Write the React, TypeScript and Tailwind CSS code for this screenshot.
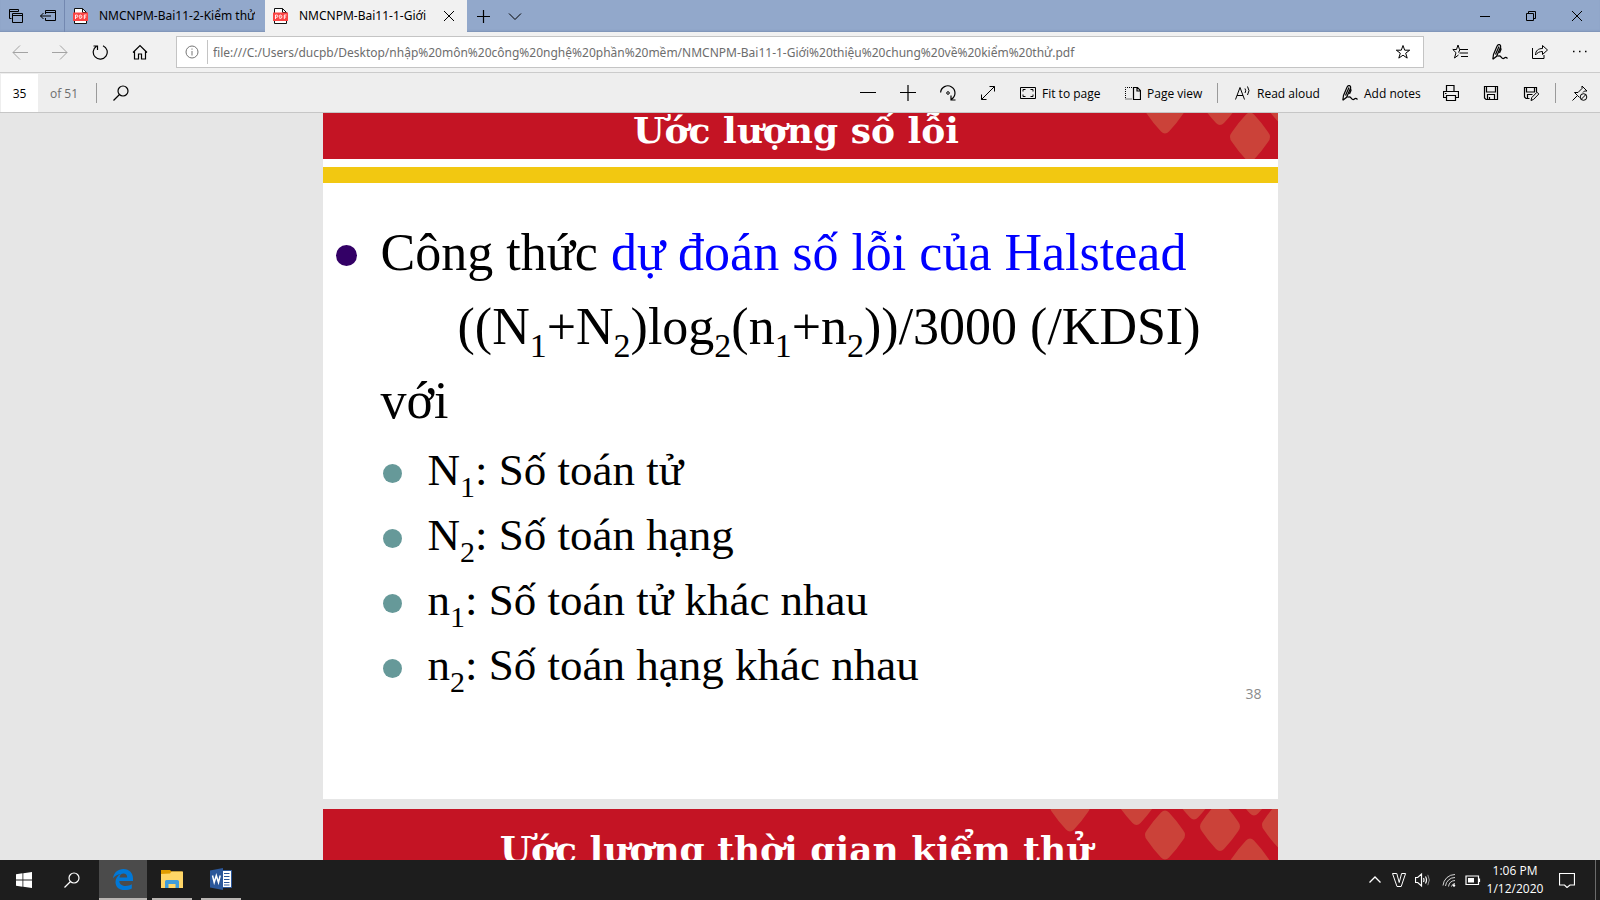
import React from "react";

type SvgProps = { children: React.ReactNode; size?: string; box?: string; className?: string };

function Icon({ children, size = "size-4", box = "0 0 16 16", className = "" }: SvgProps) {
  return (
    <svg
      viewBox={box}
      className={`${size} shrink-0 ${className}`}
      fill="none"
      stroke="currentColor"
      strokeWidth="1"
      aria-hidden="true"
    >
      {children}
    </svg>
  );
}

const PdfIcon = () => (
  <svg viewBox="0 0 16 16" className="size-4 shrink-0" aria-hidden="true">
    <path d="M1.5 .5h8l4 4v11h-12z" fill="#fff" stroke="#111" />
    <path d="M9.5 .5v4h4" fill="none" stroke="#111" />
    <rect x="0" y="4.500" width="15" height="8.500" fill="#fb4444" />
    <path
      d="M2.500 11V7h1.300a1 1 0 0 1 0 2.300H2.500M6.800 7v3.500h.7c1.900 0 1.900-3.500 0-3.500zM11.300 11V7h2.200M11.300 9h1.800"
      fill="none"
      stroke="#fff"
      strokeWidth=".9"
    />
  </svg>
);

const PenIcon = () => (
  <Icon>
    <path
      d="M.8 15.300L1.500 10.500 5 2.200C6.200-.4 9.300.4 8.500 3.200L4.600 12.300.8 15.300M3.500 10.500L7 2.500M8.500 3.200L9 5.500 7.500 9M5.500 12.300c1.600-.8 2.700-.6 3.700.8s2 2 3.200.9 2-.6 3.100.5"
      strokeWidth="1.200"
    />
  </Icon>
);

const SearchIcon = ({ size = "size-4" }: { size?: string }) => (
  <Icon size={size}>
    <circle cx="10" cy="6" r="5" strokeWidth="1.200" />
    <path d="M6.500 9.500L.5 15.500" strokeWidth="1.200" />
  </Icon>
);

function IconButton({ label, children, className = "w-10" }: { label: string; children: React.ReactNode; className?: string }) {
  return (
    <button type="button" aria-label={label} className={`flex h-full shrink-0 items-center justify-center ${className}`}>
      {children}
    </button>
  );
}

function TextButton({ label, children, className }: { label: string; children: React.ReactNode; className: string }) {
  return (
    <button type="button" className={`flex h-full shrink-0 items-center gap-1.5 whitespace-nowrap pl-3 ${className}`}>
      {children}
      <span className="pt-0.5">{label}</span>
    </button>
  );
}

function TabBar() {
  return (
    <header className="flex h-8 shrink-0 items-stretch bg-[#92a8cb] shadow-[inset_0_-2px_2px_-1px_#7d92b5]">
      <IconButton label="Tabs you've set aside" className="w-8">
        <Icon>
          <path d="M3.500 10.500h-2v-9h9v2M1.500 3.500h9M4.500 5.500h10v9h-10zM4.500 7.500h10" />
        </Icon>
      </IconButton>
      <IconButton label="Set these tabs aside" className="w-8">
        <Icon>
          <path d="M5.500 6V2.500h10v10h-10V10M5.500 4.500h10M.5 8H11M3.500 5L.5 8l3 3" />
        </Icon>
      </IconButton>
      <div role="tablist" className="flex font-['Noto_Sans',sans-serif]">
        <button type="button" role="tab" aria-selected="false" className="flex w-[201px] items-center gap-2.5 border-l border-[#7388b0] px-2">
          <PdfIcon />
          <span className="overflow-hidden whitespace-nowrap">NMCNPM-Bai11-2-Kiểm thử</span>
        </button>
        <div className="flex w-[202px] items-center bg-[#f1f1f1] pl-2">
          <button type="button" role="tab" aria-selected="true" className="flex w-[168px] items-center gap-2.5">
            <PdfIcon />
            <span className="overflow-hidden whitespace-nowrap">NMCNPM-Bai11-1-Giới</span>
          </button>
          <button type="button" aria-label="Close tab" className="p-0.5">
            <Icon size="size-3" box="0 0 12 12">
              <path d="M1 1l10 10M11 1L1 11" />
            </Icon>
          </button>
        </div>
      </div>
      <IconButton label="New tab" className="w-8">
        <Icon>
          <path d="M8.500 2v13M2 8.500h13" strokeWidth="1.200" />
        </Icon>
      </IconButton>
      <IconButton label="Show tab previews" className="w-8">
        <Icon>
          <path d="M2 5.500l6 6 6-6" />
        </Icon>
      </IconButton>
      <div className="ml-auto flex">
        <IconButton label="Minimize" className="w-[46px]">
          <Icon size="size-2.5" box="0 0 10 10">
            <path d="M0 5.500h10" />
          </Icon>
        </IconButton>
        <IconButton label="Restore" className="w-[46px]">
          <Icon size="size-2.5" box="0 0 10 10">
            <path d="M.5 2.500h7v7h-7zM2.500 2.500v-2h7v7h-2" />
          </Icon>
        </IconButton>
        <IconButton label="Close" className="w-[46px]">
          <Icon size="size-2.5" box="0 0 10 10">
            <path d="M0 0l10 10M10 0L0 10" />
          </Icon>
        </IconButton>
      </div>
    </header>
  );
}

function NavBar() {
  return (
    <nav className="flex h-[41px] shrink-0 items-center border-b border-[#cbcbcb] bg-[#f1f1f1]">
      <div className="flex h-full text-[#a3a3a3]">
        <IconButton label="Back">
          <Icon>
            <path d="M1 8.500h15M8 1.500l-7 7 7 7" />
          </Icon>
        </IconButton>
        <IconButton label="Forward">
          <Icon>
            <path d="M0 8.500h15M8 1.500l7 7-7 7" />
          </Icon>
        </IconButton>
      </div>
      <IconButton label="Refresh">
        <Icon>
          <path d="M11 1.700A7 7 0 1 1 4.500 2.200M1.500 2h4v4" strokeWidth="1.200" />
        </Icon>
      </IconButton>
      <IconButton label="Home">
        <Icon>
          <path d="M1 8.500l7-7 7 7M2.500 7.500v7.500h4v-5h3v5h4V7.500" strokeWidth="1.200" />
        </Icon>
      </IconButton>
      <div className="ml-4 flex h-8 min-w-0 flex-1 items-center border border-[#c4c4c4] bg-white">
        <span className="flex w-[30px] shrink-0 justify-center text-[#767676]">
          <Icon size="size-3.5" box="0 0 14 14">
            <circle cx="7" cy="7" r="6" />
            <path d="M7 6v4.500M7 3.500v1.200" />
          </Icon>
        </span>
        <span className="h-6 w-px shrink-0 bg-[#c4c4c4]" />
        <input
          aria-label="Address"
          className="min-w-0 flex-1 bg-transparent pl-[5px] pt-0.5 font-['Noto_Sans',sans-serif] text-[#6d6d6d] outline-none"
          defaultValue="file:///C:/Users/ducpb/Desktop/nhập%20môn%20công%20nghệ%20phần%20mềm/NMCNPM-Bai11-1-Giới%20thiệu%20chung%20về%20kiểm%20thử.pdf"
        />
        <IconButton label="Add to favorites">
          <Icon>
            <path d="M8 1.500l1.700 4.700h5L10.700 9.200l1.500 4.900L8 11.200l-4.200 2.900L5.300 9.200 1.300 6.200h5z" />
          </Icon>
        </IconButton>
      </div>
      <div className="ml-4 flex h-full">
        <IconButton label="Favorites and history">
          <Icon>
            <path d="M11 5.500H7.500L6 1 4.500 5.500H.8l3.200 3.200L2.500 14 6.500 11M6.500 8.500L8 5.500M8 5.500h8M7.500 9h8.500M9 12.500h7" />
          </Icon>
        </IconButton>
        <IconButton label="Add notes to page">
          <PenIcon />
        </IconButton>
        <IconButton label="Share">
          <Icon>
            <path d="M.5 4v10.500h11.500V11M3.500 11c0-4.500 3-6.500 7-6.500V1.500l5 4.500-5 4.500v-3c-3 0-5 1-7 3.500z" />
          </Icon>
        </IconButton>
        <IconButton label="Settings and more">
          <Icon>
            <path d="M1 7.500h1.500M7 7.500h1.500M13 7.500h1.500" strokeWidth="1.500" />
          </Icon>
        </IconButton>
      </div>
    </nav>
  );
}

function PdfToolbar() {
  return (
    <div role="toolbar" aria-label="PDF" className="flex h-10 shrink-0 items-center border-b border-[#c6c6c6] bg-[#eeeeee]">
      <input aria-label="Page number" defaultValue="35" className="ml-px h-[38px] w-[37px] bg-white pt-0.5 text-center outline-none" />
      <span className="ml-3 w-[45px] pt-0.5 text-[#6d6d6d]">of 51</span>
      <span className="ml-px h-5 w-px bg-[#9a9a9a]" />
      <IconButton label="Find" className="w-12">
        <SearchIcon />
      </IconButton>
      <div className="ml-auto flex h-full items-center">
        <IconButton label="Zoom out">
          <Icon>
            <path d="M0 7.500h16" />
          </Icon>
        </IconButton>
        <IconButton label="Zoom in">
          <Icon>
            <path d="M0 7.500h16M8 0v16" strokeWidth="1.200" />
          </Icon>
        </IconButton>
        <IconButton label="Rotate">
          <Icon>
            <path d="M.6 7.500A7.200 7.200 0 1 1 11.500 14.200M11 10.500v4.500h4.500" strokeWidth="1.200" />
            <circle cx="8" cy="8" r="1.300" />
          </Icon>
        </IconButton>
        <IconButton label="Full screen">
          <Icon>
            <path d="M1.500 14.500l13-13M9.500 1.500h5v5M1.500 9.500v5h5" />
          </Icon>
        </IconButton>
        <TextButton label="Fit to page" className="w-[105px]">
          <Icon>
            <path d="M.5 2.500h15v11H.5zM3 6.500v-2h2.500M10.500 4.500H13v2M3 9.500v2h2.500M10.500 11.500H13v-2" />
          </Icon>
        </TextButton>
        <TextButton label="Page view" className="w-[104px]">
          <Icon>
            <path d="M8.500 2.500h4l3 3v9h-7zM12 2.500v3.500h3.500" strokeWidth="1.200" />
            <path d="M7 2.500H.5v11.500H7" strokeDasharray="1 1" />
          </Icon>
        </TextButton>
        <span className="mr-[5px] h-5 w-px bg-[#9a9a9a]" />
        <TextButton label="Read aloud" className="w-[107px]">
          <Icon>
            <path d="M.5 14.500L5 2.500l4.500 12M2 10.500h6M10 3.500q1.500 2.200 0 4.500M12.500 1.500q3 4 0 8.500" />
          </Icon>
        </TextButton>
        <TextButton label="Add notes" className="w-[101px]">
          <PenIcon />
        </TextButton>
        <IconButton label="Print">
          <Icon>
            <path d="M3.500 6V.5h7.500V6M3.500 12.500h-3v-6h15v6h-3M3.500 10.500h9v5h-9zM2 8.500h1.500" strokeWidth="1.200" />
          </Icon>
        </IconButton>
        <IconButton label="Save">
          <Icon>
            <path d="M1.500 1.500h13v13H3l-1.500-1.500zM3.500 1.500v5.500h9V1.500M4.500 14.500v-5h7v5M6.500 14.500v-2.500" strokeWidth="1.200" />
          </Icon>
        </IconButton>
        <IconButton label="Save as">
          <Icon>
            <path d="M6.500 13.500H3L1.500 12V2.500h12V7M3.500 2.500v4.500h8V2.500M4.500 13.500v-4h5" strokeWidth="1.200" />
            <path d="M8 15.500l.8-3L14 7.200l1.800 1.800-5.200 5.400z" />
          </Icon>
        </IconButton>
        <span className="mx-1 h-5 w-px bg-[#9a9a9a]" />
        <IconButton label="Unpin toolbar">
          <Icon>
            <path d="M.5 15.500l5-5M2.500 7.500l3 3 2 2M2.500 7.500h3.500L10 3.500V1l5 5h-2.500l-1.500 1.500" />
            <circle cx="11.500" cy="12" r="3.300" />
            <path d="M9.200 14.300l4.600-4.600" />
          </Icon>
        </IconButton>
      </div>
    </div>
  );
}

const diamonds = [
  [-58, -2],
  [8.5, -8.5],
  [37, 26],
  [66, -14],
  [92, 17.5],
  [126, -18],
  [154, 16],
  [122, 54],
];

function SlideHeader({ title, className }: { title: string; className: string }) {
  return (
    <div className={`relative h-[76px] overflow-hidden bg-[#c41424] pr-2 text-center ${className}`}>
      <svg viewBox="-90 0 240 76" className="absolute right-0 top-0 h-[76px] w-[240px]" fill="#cb4239" aria-hidden="true">
        {diamonds.map(([x, y]) => (
          <path
            key={`${x}-${y}`}
            transform={`translate(${x} ${y})`}
            d="M-4-22.500Q0-26.500 4-22.500Q12-14 18-5Q22 0 18 5Q12 14 4 22.500Q0 26.500-4 22.500Q-12 14-18 5Q-22 0-18-5Q-12-14-4-22.500Z"
          />
        ))}
      </svg>
      <h2 className="relative whitespace-nowrap font-['DejaVu_Serif',serif] text-[36px] font-bold leading-[44px] text-white">
        {title}
      </h2>
    </div>
  );
}

const Sub = ({ children }: { children: string }) => <sub className="static align-[-13px] text-[34px] leading-none">{children}</sub>;
const SmallSub = ({ children }: { children: string }) => <sub className="static align-[-12px] text-[30px] leading-none">{children}</sub>;

const terms = [
  { name: "N", index: "1", text: "Số toán tử" },
  { name: "N", index: "2", text: "Số toán hạng" },
  { name: "n", index: "1", text: "Số toán tử khác nhau" },
  { name: "n", index: "2", text: "Số toán hạng khác nhau" },
];

function Document() {
  return (
    <main className="min-h-0 flex-1 overflow-hidden bg-[#e6e6e6]">
      <div className="mx-auto -mt-[30px] flex w-[955px] flex-col gap-2.5">
        <section className="flex h-[716px] shrink-0 flex-col bg-white font-['Liberation_Serif',serif] text-black">
          <SlideHeader title="Ước lượng số lỗi" className="shrink-0 pt-[25px]" />
          <div className="mt-2 h-4 shrink-0 bg-[#f2c811]" />
          <div className="mt-[33px] whitespace-nowrap text-[52px] leading-[74px]">
            <p className="flex items-center pl-[13px]">
              <span className="mr-6 mt-1 size-[21px] rounded-full bg-[#330066]" />
              <span>
                Công thức <span className="text-[#0000ff]">dự đoán số lỗi của Halstead</span>
              </span>
            </p>
            <p className="h-[74px] pl-[135px]">
              ((N<Sub>1</Sub>+N<Sub>2</Sub>)log<Sub>2</Sub>(n<Sub>1</Sub>+n<Sub>2</Sub>))/3000 (/KDSI)
            </p>
            <p className="pl-[58px]">với</p>
          </div>
          <ul className="whitespace-nowrap pl-[60px] text-[45px] leading-[65px]">
            {terms.map((t) => (
              <li key={t.name + t.index} className="flex h-[65px] items-center">
                <span className="mr-[26px] mt-1.5 size-[19px] rounded-full bg-[#669999]" />
                <span>
                  {t.name}
                  <SmallSub>{t.index}</SmallSub>: {t.text}
                </span>
              </li>
            ))}
          </ul>
          <p className="-mt-3 pr-4 text-right font-['Open_Sans',sans-serif] text-sm leading-4 text-[#8b8b8b]">38</p>
        </section>
        <section className="h-[716px] shrink-0 bg-white">
          <SlideHeader title="Ước lượng thời gian kiểm thử" className="pt-[18px]" />
        </section>
      </div>
    </main>
  );
}

function Taskbar() {
  return (
    <footer className="flex h-10 shrink-0 items-stretch bg-[#1d1d1d] text-white">
      <IconButton label="Start" className="w-12">
        <svg viewBox="0 0 16 16" className="size-4" fill="#fff" aria-hidden="true">
          <path d="M0 2.200L6.500 1.300v6.200H0zM7.300 1.200L16 0v7.500H7.300zM0 8.400h6.500v6.300L0 13.800zM7.300 8.400H16V16l-8.700-1.200z" />
        </svg>
      </IconButton>
      <IconButton label="Search" className="w-12">
        <SearchIcon />
      </IconButton>
      <button type="button" aria-label="Microsoft Edge" className="ml-[3px] flex w-12 items-center justify-center border-b-2 border-[#b9b5b2] bg-[#4b4b4b]">
        <svg viewBox="0 0 20 21" className="h-[21px] w-5" fill="#0078d7" aria-hidden="true">
          <path d="M0 9.500C.8 3.500 5 0 10.500 0 16.500 0 20 4.300 20 9.500V12H6.300c.2 3.600 3.200 5 6.300 5 2.400 0 4.400-.6 6.200-1.700v4.200c-2 1-4.600 1.500-7.200 1.500C6 21 2.500 17.800 2.500 12.900c0-3.600 2-6.600 5.300-8C4.500 5 1.500 7 0 9.500zM6.500 8.400h7.700c0-2.600-1.400-3.900-3.600-3.900-2.300 0-3.800 1.700-4.100 3.900z" />
        </svg>
      </button>
      <button type="button" aria-label="File Explorer" className="ml-[5px] flex w-10 items-center justify-center border-b-2 border-[#b9b5b2]">
        <svg viewBox="0 0 22 18" className="h-[18px] w-[22px]" aria-hidden="true">
          <path d="M0 0h9l1.500 1.500H21V18H0z" fill="#e09c00" />
          <path d="M0 4l9-.5L10.500 1.500H22V18H0z" fill="#ffd667" />
          <path d="M4 18v-6.500q0-1.500 1.500-1.500h11q1.500 0 1.500 1.500V18h-3.500v-4h-7v4z" fill="#3f9ddb" />
        </svg>
      </button>
      <button type="button" aria-label="Word" className="ml-[9px] flex w-10 items-center justify-center border-b-2 border-[#b9b5b2]">
        <svg viewBox="0 0 22 22" className="size-[22px]" aria-hidden="true">
          <path d="M12 2.500h9.500v17H12z" fill="#fff" stroke="#2b579a" />
          <path d="M14 5.500h5.500M14 8.500h5.500M14 11.500h5.500M14 14.500h5.500M14 17h5.500" stroke="#2b579a" />
          <path d="M0 2.500L13 0v22L0 19.500z" fill="#2b579a" />
          <path d="M2.500 7.500l1.700 7 2.100-7 2.200 7 1.700-7" fill="none" stroke="#fff" strokeWidth="1.500" />
        </svg>
      </button>
      <div className="ml-auto flex items-center">
        <IconButton label="Show hidden icons" className="w-6">
          <Icon>
            <path d="M2.500 10.500L8 5l5.500 5.500" strokeWidth="1.300" />
          </Icon>
        </IconButton>
        <IconButton label="Keyboard" className="w-6">
          <Icon>
            <path d="M1.500 1.500h4.300l2.400 9 2.400-9h4L10.200 14.500H6z" />
          </Icon>
        </IconButton>
        <IconButton label="Volume" className="w-6">
          <Icon>
            <path d="M.5 5.500h2.200L6.500 2v12L2.700 10.500H.5zM8.500 6q1 2 0 4M10.500 4.500q2 3.500 0 7" strokeWidth="1.200" />
            <path d="M12.800 2.800q3 5.200 0 10.400" opacity=".5" />
          </Icon>
        </IconButton>
        <IconButton label="Network" className="w-7">
          <Icon size="size-3.5" box="0 0 14 14">
            <path d="M1 12.500A12 12 0 0 1 13 1.500M3.500 13A9.500 9.500 0 0 1 13 4.500M6.500 13.500A7 7 0 0 1 13 7.500M9.500 13.500A4 4 0 0 1 13 10.500" opacity=".8" />
            <circle cx="12" cy="12.500" r="1.200" fill="currentColor" stroke="none" />
          </Icon>
        </IconButton>
        <IconButton label="Battery" className="w-5">
          <Icon>
            <path d="M1 4h12.500v8.500H1zM14.500 6.500v3.500" strokeWidth="1.200" />
            <rect x="3" y="6" width="6" height="4.500" fill="currentColor" stroke="none" />
          </Icon>
        </IconButton>
        <button type="button" className="flex w-16 flex-col items-center whitespace-nowrap leading-[18px]">
          <span>1:06 PM</span>
          <span>1/12/2020</span>
        </button>
        <IconButton label="Action center" className="ml-0.5 w-9">
          <Icon>
            <path d="M.5 1.500h15v11.500H11L8 15.500 5.500 13H.5z" strokeWidth="1.200" />
          </Icon>
        </IconButton>
        <button type="button" aria-label="Show desktop" className="ml-2.5 h-full w-[5px] border-l border-[#6b6b6b]" />
      </div>
    </footer>
  );
}

export default function App() {
  return (
    <div className="flex h-screen flex-col overflow-hidden font-['Open_Sans','Noto_Sans',sans-serif] text-[12px] leading-4 text-black">
      <TabBar />
      <NavBar />
      <PdfToolbar />
      <Document />
      <Taskbar />
    </div>
  );
}
